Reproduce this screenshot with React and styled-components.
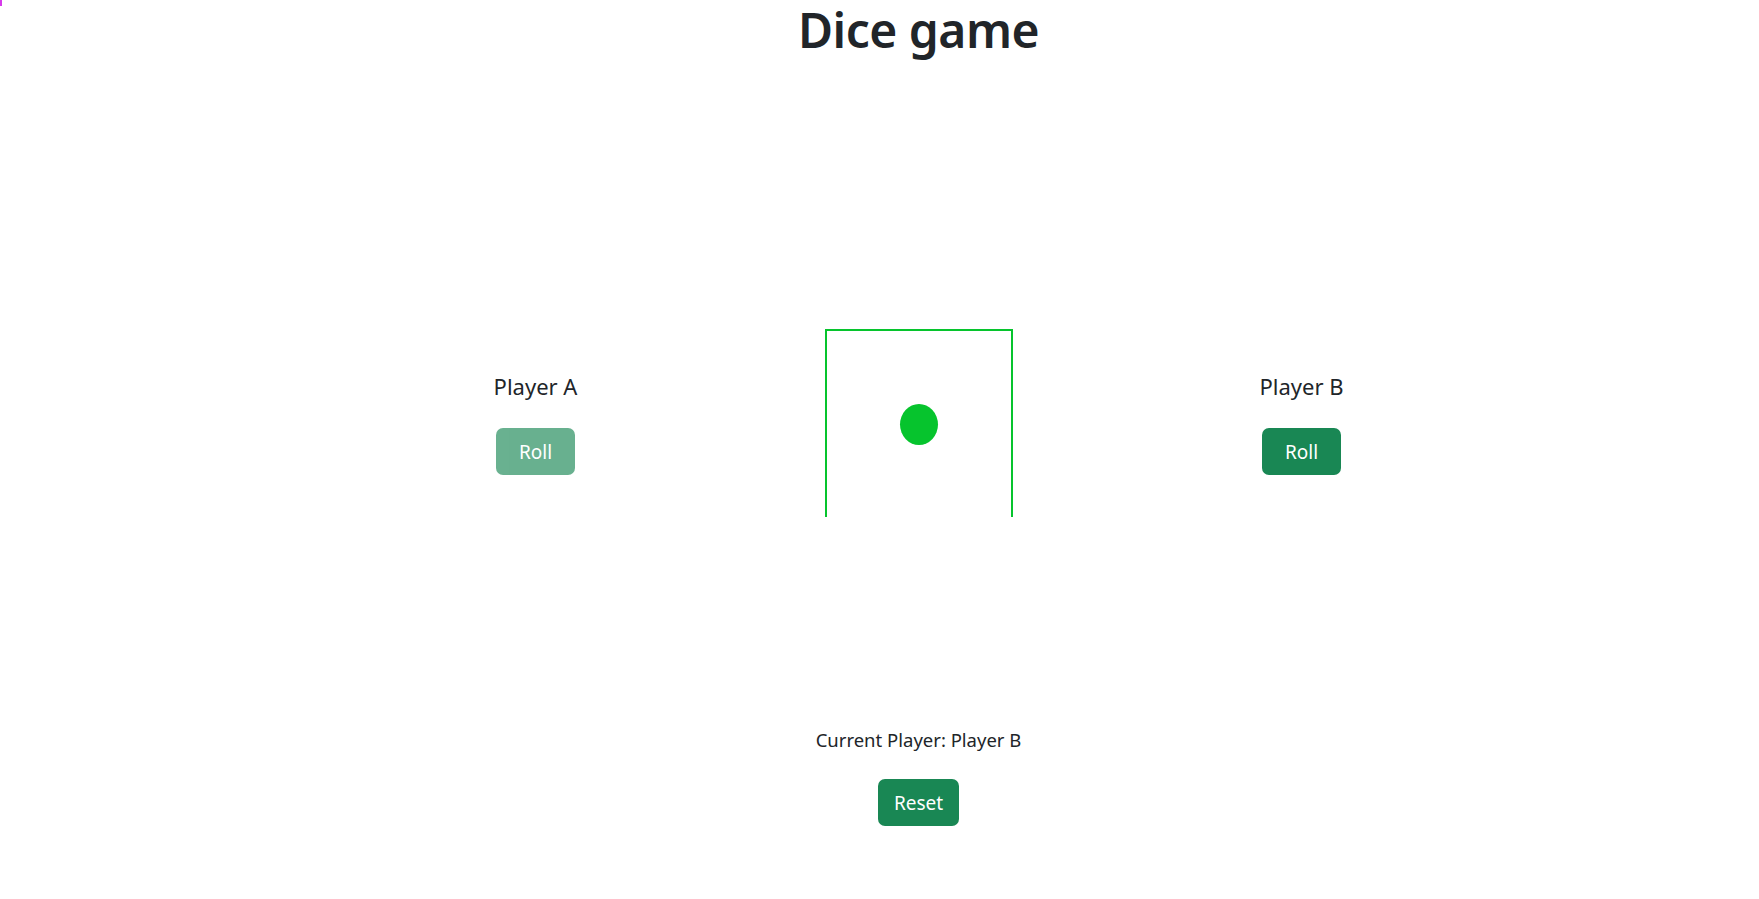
import React, { useState } from "react";
import styled, { createGlobalStyle } from "styled-components";

const GlobalStyle = createGlobalStyle`
  body {
    margin: 0;
    font-family: "Noto Sans", "Open Sans", sans-serif;
    font-size: 20px;
    color: #212529;
    background: #fff;
  }
`;

export default function App() {
  const [current, setCurrent] = useState("Player B");
  const [value] = useState(1);

  return (
    <>
      <GlobalStyle />
      <Marker />
      <Page>
        <Title>Dice game</Title>
        <Board>
          <PlayerCol>
            <PlayerName>Player A</PlayerName>
            <RollButton wide disabled={current !== "Player A"} onClick={() => setCurrent("Player B")}>
              Roll
            </RollButton>
          </PlayerCol>
          <DiceCol>
            <Dice>{value === 1 && <Dot />}</Dice>
          </DiceCol>
          <PlayerCol>
            <PlayerName>Player B</PlayerName>
            <RollButton wide disabled={current !== "Player B"} onClick={() => setCurrent("Player A")}>
              Roll
            </RollButton>
          </PlayerCol>
        </Board>
        <Footer>
          <CurrentText>Current Player: {current}</CurrentText>
          <RollButton onClick={() => setCurrent("Player A")}>Reset</RollButton>
        </Footer>
      </Page>
    </>
  );
}

const Marker = styled.div`
  position: absolute;
  top: 0;
  left: 0;
  width: 2px;
  height: 6px;
  background: #d63bea;
`;

const Page = styled.div`
  margin-left: 78px;
  display: flex;
  flex-direction: column;
  align-items: center;
`;

const Title = styled.h1`
  margin: 0;
  font-size: 48px;
  font-weight: 600;
  line-height: 60px;
  letter-spacing: -0.5px;
`;

const Board = styled.div`
  margin-top: 269px;
  display: grid;
  grid-template-columns: repeat(3, 383px);
  align-items: center;
`;

const PlayerCol = styled.div`
  display: flex;
  flex-direction: column;
  align-items: center;
`;

const PlayerName = styled.h5`
  margin: 0 0 27px;
  font-size: 22px;
  font-weight: 400;
  line-height: 30px;
`;

const RollButton = styled.button`
  height: 47px;
  padding: 0 ${({ wide }) => (wide ? "23px" : "16px")};
  border: none;
  border-radius: 7px;
  background: #198754;
  color: #fff;
  font-family: inherit;
  font-size: 19px;
  cursor: pointer;
  opacity: ${({ disabled }) => (disabled ? 0.65 : 1)};
`;

const DiceCol = styled.div`
  display: flex;
  justify-content: center;
`;

const Dice = styled.div`
  width: 184px;
  height: 186px;
  border: 2px solid #06c42d;
  border-bottom: none;
  display: flex;
  align-items: center;
  justify-content: center;
`;

const Dot = styled.div`
  width: 38px;
  height: 41px;
  border-radius: 50%;
  background: #06c42d;
`;

const Footer = styled.div`
  margin-top: 208px;
  display: flex;
  flex-direction: column;
  align-items: center;
`;

const CurrentText = styled.p`
  margin: 0 0 24px;
  font-size: 18.5px;
  line-height: 30px;
`;
